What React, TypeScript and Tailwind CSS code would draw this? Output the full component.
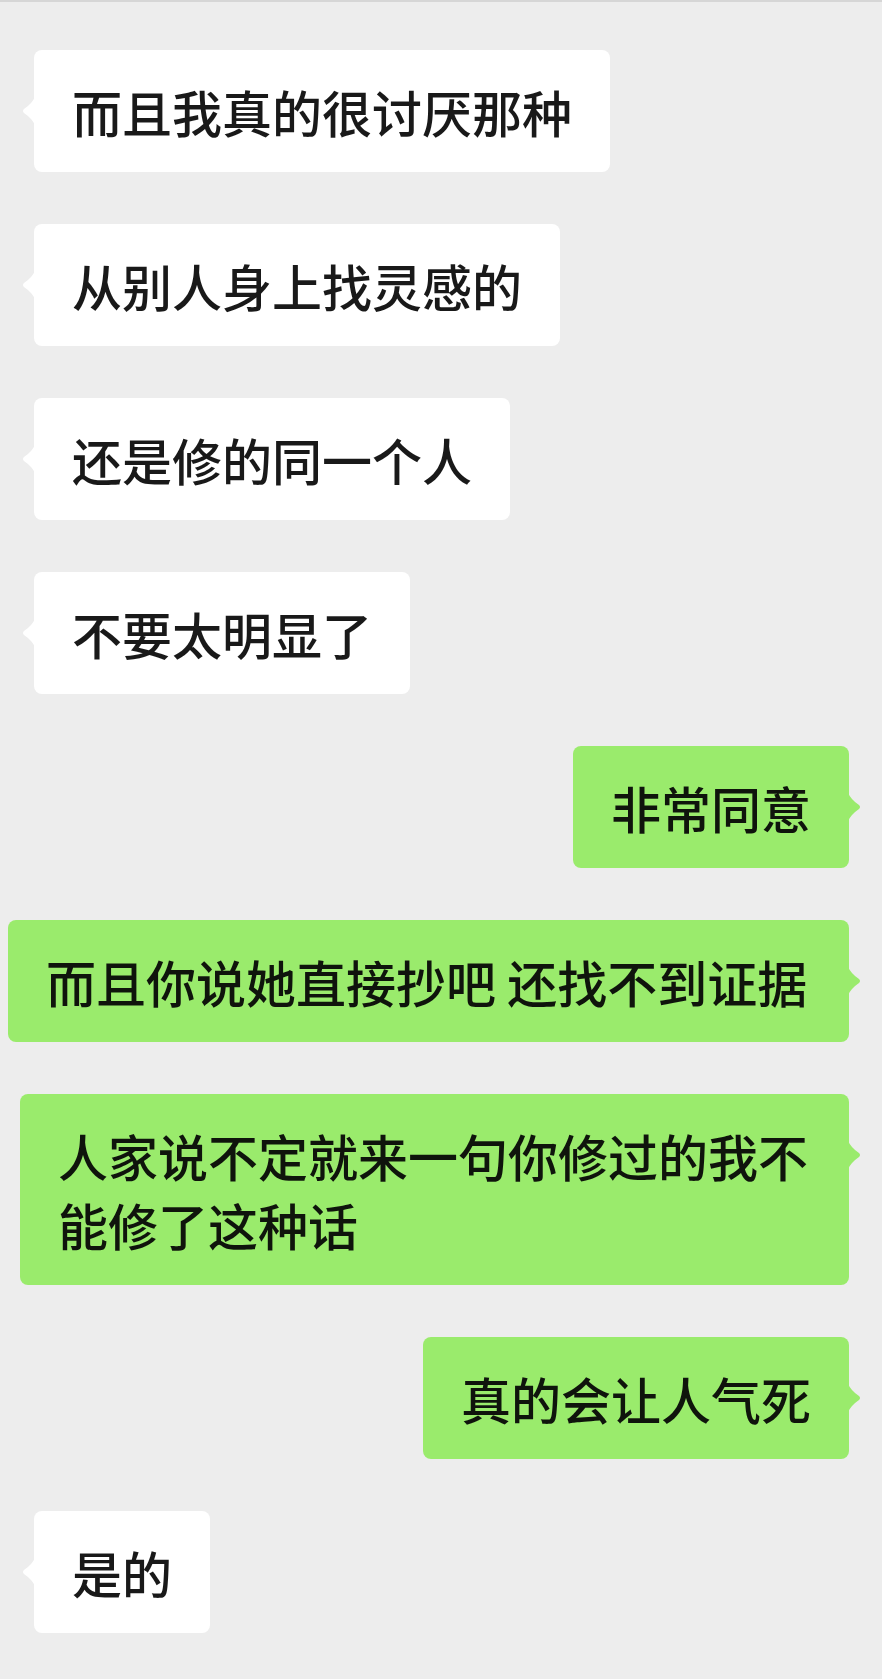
type Message = {
  text: string;
  mine: boolean;
  width?: string;
};

const messages: Message[] = [
  { text: "而且我真的很讨厌那种", mine: false },
  { text: "从别人身上找灵感的", mine: false },
  { text: "还是修的同一个人", mine: false },
  { text: "不要太明显了", mine: false },
  { text: "非常同意", mine: true },
  { text: "而且你说她直接抄吧 还找不到证据", mine: true, width: "w-[841px]" },
  { text: "人家说不定就来一句你修过的我不能修了这种话", mine: true, width: "w-[829px]" },
  { text: "真的会让人气死", mine: true },
  { text: "是的", mine: false },
];

const Tail = ({ mine }: { mine: boolean }) => (
  <svg
    width="15"
    height="28"
    viewBox="0 0 15 28"
    className={mine ? "absolute -right-[14px] top-[47px]" : "absolute -left-[14px] top-[47px]"}
  >
    {mine ? (
      <path d="M0 0 C2 4 5 8 11 12 Q13 14 11 16 C5 20 2 24 0 28 Z" fill="#9aeb6c" />
    ) : (
      <path d="M15 0 C13 4 10 8 4 12 Q2 14 4 16 C10 20 13 24 15 28 Z" fill="#ffffff" />
    )}
  </svg>
);

const Bubble = ({ message }: { message: Message }) => (
  <div className={message.mine ? "flex justify-end pr-[33px]" : "flex justify-start pl-[34px]"}>
    <div
      className={`relative rounded-lg px-[38px] py-[26.5px] text-[50px] font-medium leading-[69px] max-w-[841px] ${
        message.width ?? ""
      } ${message.mine ? "bg-[#9aeb6c] text-[#0f140c]" : "bg-white text-[#191919]"}`}
      style={{ fontFamily: '"Noto Sans CJK SC", "Noto Sans", sans-serif' }}
    >
      <Tail mine={message.mine} />
      {message.text}
    </div>
  </div>
);

export default function App() {
  return (
    <div className="min-h-screen bg-[#ededed] border-t-2 border-[#d6d6d6]">
      <div className="flex flex-col gap-[52px] pt-[48px] pb-12">
        {messages.map((message, index) => (
          <Bubble key={index} message={message} />
        ))}
      </div>
    </div>
  );
}
